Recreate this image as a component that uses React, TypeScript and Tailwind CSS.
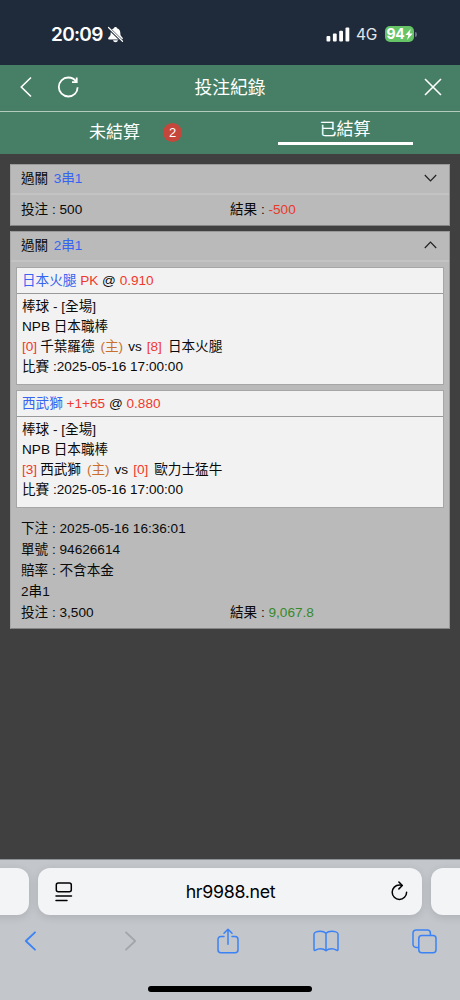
import type { ReactNode } from 'react'

interface Team {
  name: string
  score: number
}

interface Leg {
  pick: string
  line: string
  odds: string
  league: string
  home: Team
  away: Team
  time: string
}

const legs: Leg[] = [
  {
    pick: '日本火腿',
    line: 'PK',
    odds: '0.910',
    league: 'NPB 日本職棒',
    home: { name: '千葉羅德', score: 0 },
    away: { name: '日本火腿', score: 8 },
    time: '2025-05-16 17:00:00',
  },
  {
    pick: '西武獅',
    line: '+1+65',
    odds: '0.880',
    league: 'NPB 日本職棒',
    home: { name: '西武獅', score: 3 },
    away: { name: '歐力士猛牛', score: 0 },
    time: '2025-05-16 17:00:00',
  },
]

const details = ['下注 : 2025-05-16 16:36:01', '單號 : 94626614', '賠率 : 不含本金', '2串1']

function StatusBar() {
  return (
    <div className="flex h-[65px] items-center justify-between bg-[#1f2b3b] pr-[43px] pl-[51px] pt-[3px] font-['Inter','Liberation_Sans',sans-serif] text-white">
      <div className="flex items-center gap-[4px]">
        <span className="text-[19px] leading-none font-semibold tracking-[-0.7px]">20:09</span>
        <svg width="17" height="17" viewBox="0 0 17 17" fill="none">
          <path d="M8.5 1C7.6 1 7 1.6 6.9 2.3C4.8 3 3.7 4.6 3.7 6.8C3.7 9.6 3 10.3 1.6 11.5C0.8 12.3 1 13.4 2 13.4H15C16 13.4 16.2 12.3 15.4 11.5C14 10.3 13.3 9.6 13.3 6.8C13.3 4.6 12.2 3 10.1 2.3C10 1.6 9.4 1 8.5 1Z" fill="white" />
          <path d="M6 14.3H11C10.6 15.5 9.7 16.3 8.5 16.3S6.4 15.5 6 14.3Z" fill="white" />
          <path d="M1 1.5L15.5 15.5" stroke="#1f2b3b" strokeWidth="2.7" />
          <path d="M1.5 1.5L15.5 15.3" stroke="white" strokeWidth="1.2" strokeLinecap="round" />
        </svg>
      </div>
      <div className="flex items-center">
        <svg width="24" height="15" viewBox="0 0 24 15" fill="white">
          <rect x="0.5" y="9" width="3.8" height="5.5" rx="1" />
          <rect x="6.9" y="6.5" width="3.8" height="8" rx="1" />
          <rect x="13.2" y="3.8" width="3.8" height="10.7" rx="1" />
          <rect x="19.5" y="0.5" width="3.8" height="14" rx="1" />
        </svg>
        <span className="ml-[6px] w-[22px] pt-[2px] text-[15.5px] leading-none tracking-[-0.3px] text-[#e4e7ea]">4G</span>
        <span className="ml-[7px] flex h-[16px] w-[29px] items-center justify-center rounded-[5px] bg-[#65c466] text-[14px] leading-none font-bold tracking-[-0.2px]">
          94
          <svg width="8" height="11" viewBox="0 0 8 11" fill="white">
            <path d="M5.8 0L0.3 6.1H3.4L2 11L7.7 4.6H4.5Z" />
          </svg>
        </span>
        <span className="ml-px h-[5px] w-[2px] rounded-r-full bg-[#68727e]" />
      </div>
    </div>
  )
}

function NavBar() {
  return (
    <div className="flex h-[47px] items-center border-b border-[#b4cabf] bg-[#467f65] px-[19px] text-white">
      <div className="flex flex-1 items-center gap-[23px]">
        <svg className="-mt-[2px]" width="14" height="22" viewBox="0 0 14 22" fill="none" stroke="currentColor" strokeWidth="1.6">
          <path d="M12 1.5L2.3 11L12 20.5" />
        </svg>
        <svg className="-mt-[2px]" width="24" height="24" viewBox="0 0 24 24" fill="none" stroke="currentColor" strokeWidth="1.8">
          <path d="M20.3 7C18.6 3.9 15.4 2.5 12.2 2.5C6.9 2.5 2.8 6.7 2.8 12S7 21.5 12.2 21.5C17.5 21.5 21.6 17.5 21.6 12.2" />
          <path d="M20.7 2.4V7.2H16" />
        </svg>
      </div>
      <h1 className="pt-[1px] text-[17.8px] leading-none">投注紀錄</h1>
      <div className="flex flex-1 justify-end">
        <svg className="-mt-[2px] -mr-px" width="18" height="18" viewBox="0 0 18 18" fill="none" stroke="currentColor" strokeWidth="1.6">
          <path d="M1 1L17 17M17 1L1 17" />
        </svg>
      </div>
    </div>
  )
}

function Tabs() {
  return (
    <div className="grid h-[42px] grid-cols-2 bg-[#467f65] text-[17px] leading-none text-white">
      <div className="flex items-center justify-center pb-[1px] pl-[41px]">
        <span>未結算</span>
        <span className="ml-[23px] flex size-[19px] items-center justify-center rounded-full bg-[#c5473c] text-[13px]">2</span>
      </div>
      <div className="flex justify-center">
        <div className="flex h-[33px] w-[135px] items-center justify-center border-b-3 border-white pt-[4px]">已結算</div>
      </div>
    </div>
  )
}

function Card({ name, open, children }: { name: string; open?: boolean; children: ReactNode }) {
  return (
    <div className="border border-t-[#999] border-r-[#999] border-b-[#858585] border-l-[#aaa] bg-[#bababa]">
      <div className="flex h-[30px] items-center justify-between border-b-2 border-[#c3c3c3] pr-[12px] pl-[10px]">
        <div>
          過關<span className="ml-[5.5px] text-[#3764f0]">{name}</span>
        </div>
        <svg className="-mt-[3px]" width="13" height="8" viewBox="0 0 13 8" fill="none" stroke="#222" strokeWidth="1.2">
          <path d={open ? 'M0.8 7L6.5 1.2L12.2 7' : 'M0.8 1L6.5 6.8L12.2 1'} />
        </svg>
      </div>
      {children}
    </div>
  )
}

function LegBox({ leg }: { leg: Leg }) {
  return (
    <div className="h-[118px] border border-[#a6a6a6] bg-[#f2f2f2]">
      <div className="h-[26px] border-b border-[#999] pl-[5px] leading-[25px]">
        <span className="text-[#3764f0]">{leg.pick}</span> <span className="text-[#f0392c]">{leg.line}</span> @{' '}
        <span className="text-[#f0392c]">{leg.odds}</span>
      </div>
      <div className="pt-[3px] pl-[5px] leading-[20px]">
        <div>棒球 - [全場]</div>
        <div>{leg.league}</div>
        <div>
          <span className="mr-[3px] text-[#f0392c]">[{leg.home.score}]</span>
          {leg.home.name}
          <span className="mr-[5px] ml-[6px] text-[#c9702f]">(主)</span>vs
          <span className="mr-[6px] ml-[5px] text-[#f0392c]">[{leg.away.score}]</span>
          {leg.away.name}
        </div>
        <div>比賽 :{leg.time}</div>
      </div>
    </div>
  )
}

function Totals({ stake, result, win }: { stake: string; result: string; win?: boolean }) {
  return (
    <div className="grid grid-cols-[209px_1fr]">
      <div>投注 : {stake}</div>
      <div>
        結果 : <span className={win ? 'text-[#38892c]' : 'text-[#e8382d]'}>{result}</span>
      </div>
    </div>
  )
}

function BrowserBar() {
  return (
    <div className="h-[141px] overflow-hidden border-t border-[#8d9094] bg-[#c3c6cb]">
      <div className="flex justify-center gap-[9px] pt-[8px]">
        <div className="h-[47px] w-[60px] shrink-0 rounded-[12px] bg-[#f3f4f6] shadow-[0_2px_8px_rgba(0,0,0,0.12)]" />
        <div className="flex h-[47px] w-[384px] shrink-0 items-center justify-between rounded-[12px] bg-[#f3f4f6] px-[15px] text-black shadow-[0_2px_8px_rgba(0,0,0,0.12)]">
          <svg className="ml-[2px]" width="18" height="20" viewBox="0 0 18 20" fill="none" stroke="currentColor" strokeWidth="1.5" strokeLinecap="round">
            <rect x="1.3" y="1" width="15" height="8.8" rx="2" />
            <path d="M1 14H16.5M1 18.5H12" />
          </svg>
          <span className="mr-[3px] font-['Inter','Liberation_Sans',sans-serif] text-[17.8px] leading-none tracking-[-0.3px]">hr9988.net</span>
          <svg className="-mt-[1px] -mr-[1px]" width="17" height="20" viewBox="0 0 17 20" fill="none" stroke="currentColor" strokeWidth="1.5" strokeLinecap="round" strokeLinejoin="round">
            <path d="M10.8 4.4C10.1 4.1 9.3 4 8.4 4C4.4 4 1.2 7.2 1.2 11.2S4.4 18.4 8.4 18.4S15.6 15.2 15.6 11.2" />
            <path d="M7.9 1L11.3 4.5L7.9 7.9" />
          </svg>
        </div>
        <div className="h-[47px] w-[60px] shrink-0 rounded-[12px] bg-[#f3f4f6] shadow-[0_2px_8px_rgba(0,0,0,0.12)]" />
      </div>
      <div className="mt-[12px] flex h-[28px] items-center pl-[24px] text-[#3b82f6]">
        <svg width="13" height="20" viewBox="0 0 13 20" fill="none" stroke="currentColor" strokeWidth="1.8" strokeLinecap="round" strokeLinejoin="round">
          <path d="M11 1.3L1.8 10L11 18.7" />
        </svg>
        <svg className="ml-[87px]" width="13" height="20" viewBox="0 0 13 20" fill="none" stroke="#a3a5a9" strokeWidth="1.8" strokeLinecap="round" strokeLinejoin="round">
          <path d="M2 1.3L11.2 10L2 18.7" />
        </svg>
        <svg className="ml-[80px]" width="22" height="26" viewBox="0 0 22 26" fill="none" stroke="currentColor" strokeWidth="1.5" strokeLinecap="round" strokeLinejoin="round">
          <path d="M7 8.5H4C2.2 8.5 1 9.7 1 11.5V21.8C1 23.6 2.2 24.8 4 24.8H18C19.8 24.8 21 23.6 21 21.8V11.5C21 9.7 19.8 8.5 18 8.5H15" />
          <path d="M11 16.3V1.3M7 5.2L11 1.2L15 5.2" />
        </svg>
        <svg className="ml-[74px]" width="26" height="22" viewBox="0 0 26 22" fill="none" stroke="currentColor" strokeWidth="1.5" strokeLinejoin="round">
          <path d="M13 3.3C11.6 1.8 9.6 1.2 7.2 1.2C4.9 1.2 1 2 1 4V19.6C1 20.6 1.7 20.7 2.6 20.1C3.8 19.3 5.4 18.7 7.2 18.7C9.6 18.7 11.6 19.3 13 20.8V3.3Z" />
          <path d="M13 3.3C14.4 1.8 16.4 1.2 18.8 1.2C21.1 1.2 25 2 25 4V19.6C25 20.6 24.3 20.7 23.4 20.1C22.2 19.3 20.6 18.7 18.8 18.7C16.4 18.7 14.4 19.3 13 20.8" />
        </svg>
        <svg className="ml-[73px]" width="25" height="25" viewBox="0 0 25 25" fill="none" stroke="currentColor" strokeWidth="1.5" strokeLinejoin="round">
          <path d="M6.8 18.4H4.2C2.2 18.4 1 17.2 1 15.2V4.2C1 2.2 2.2 1 4.2 1H15.2C17.2 1 18.4 2.2 18.4 4.2V6.5" />
          <rect x="6.8" y="6.5" width="17.2" height="17.2" rx="3" />
        </svg>
      </div>
      <div className="mx-auto mt-[31px] h-[6px] w-[164px] rounded-full bg-black" />
    </div>
  )
}

export default function App() {
  return (
    <div className="flex h-[1000px] w-[460px] flex-col overflow-hidden bg-[#404040] font-['Liberation_Sans','Noto_Sans_CJK_TC',sans-serif] text-[13.6px] text-[#0a0a0a]">
      <StatusBar />
      <NavBar />
      <Tabs />
      <main className="flex flex-1 flex-col gap-[5px] px-[10px] pt-[10px]">
        <Card name="3串1">
          <div className="h-[30px] pl-[10px] leading-[30px]">
            <Totals stake="500" result="-500" />
          </div>
        </Card>
        <Card name="2串1" open>
          <div className="flex flex-col gap-[5px] px-[5px] pt-[5px]">
            {legs.map(leg => (
              <LegBox key={leg.pick} leg={leg} />
            ))}
          </div>
          <div className="h-[120px] pt-[10px] pl-[10px] leading-[21px]">
            {details.map(text => (
              <div key={text}>{text}</div>
            ))}
            <Totals stake="3,500" result="9,067.8" win />
          </div>
        </Card>
      </main>
      <BrowserBar />
    </div>
  )
}
